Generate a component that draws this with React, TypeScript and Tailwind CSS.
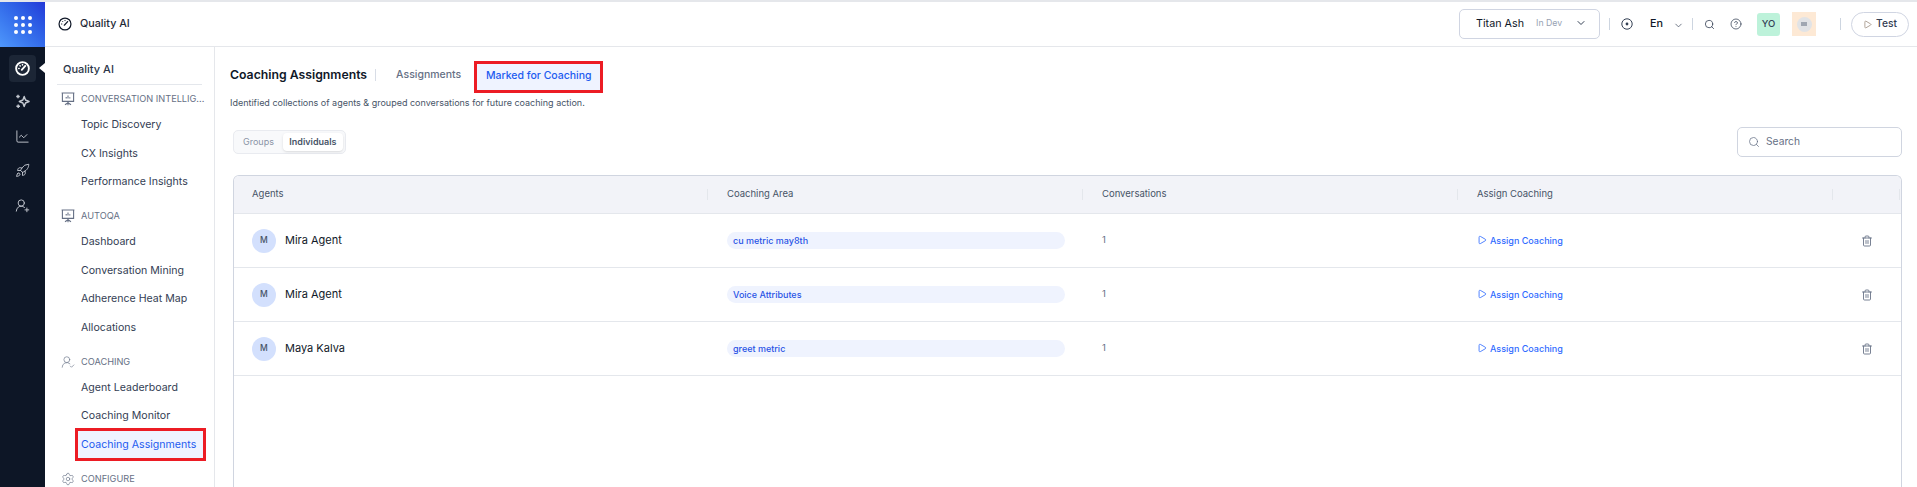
import { ChartLine, ChevronDown, CircleHelp, Play, Rocket, Search, Settings, Trash2, UserRoundCheck, UserRoundPlus } from 'lucide-react';
import type { ComponentType } from 'react';

type IconProps = { size?: number; strokeWidth?: number; className?: string };

function GaugeIcon({ size = 15, strokeWidth = 1.5, className }: IconProps) {
  return (
    <svg viewBox="0 0 16 16" width={size} height={size} fill="none" stroke="currentColor" strokeWidth={strokeWidth} strokeLinecap="round" className={className}>
      <circle cx="8" cy="8" r="6.8" />
      <path d="M7.2 9.4 11 5.2" />
      <path d="M4 8h.4M5.3 5.1l.3.3M8 3.8v.4" strokeWidth={strokeWidth * 0.8} />
    </svg>
  );
}

function BoardIcon({ size = 14, strokeWidth = 1.1, className }: IconProps) {
  return (
    <svg viewBox="0 0 14 14" width={size} height={size} fill="none" stroke="currentColor" strokeWidth={strokeWidth} className={className}>
      <path d="M.6 1h12.8M1.4 1v8.4h11.2V1" />
      <path d="M5.2 6.6V5M7 6.6V3.6M8.8 6.6V5.2" />
      <path d="M7 9.4v1.4M7 10.8l-3 2M7 10.8l3 2M7 10.8v2.4" />
    </svg>
  );
}

function StarsIcon({ size = 15, strokeWidth = 1.5, className }: IconProps) {
  return (
    <svg viewBox="0 0 16 16" width={size} height={size} fill="none" stroke="currentColor" strokeWidth={strokeWidth} strokeLinejoin="round" className={className}>
      <path d="M9.8 2.6 11.2 6.4 15 8 11.2 9.6 9.8 13.4 8.4 9.6 4.6 8 8.4 6.4Z" />
      <path d="M3.2 .8v3.8M1.3 2.7h3.8M3.4 11.2v3.8M1.5 13.1h3.8" />
    </svg>
  );
}

type NavSection = {
  title: string;
  Icon: ComponentType<IconProps>;
  items: string[];
};

const navSections: NavSection[] = [
  { title: 'CONVERSATION INTELLIG...', Icon: BoardIcon, items: ['Topic Discovery', 'CX Insights', 'Performance Insights'] },
  { title: 'AUTOQA', Icon: BoardIcon, items: ['Dashboard', 'Conversation Mining', 'Adherence Heat Map', 'Allocations'] },
  { title: 'COACHING', Icon: UserRoundCheck, items: ['Agent Leaderboard', 'Coaching Monitor', 'Coaching Assignments'] },
  { title: 'CONFIGURE', Icon: Settings, items: [] },
];

const rows = [
  { name: 'Mira Agent', area: 'cu metric may8th' },
  { name: 'Mira Agent', area: 'Voice Attributes' },
  { name: 'Maya Kalva', area: 'greet metric' },
];

const railIcons = [StarsIcon, ChartLine, Rocket, UserRoundPlus];

function DotGrid() {
  return (
    <div className="grid grid-cols-3 gap-[3px]">
      {Array.from({ length: 9 }).map((_, i) => (
        <span key={i} className="h-[4px] w-[4px] rounded-full bg-white" />
      ))}
    </div>
  );
}

function Rail() {
  return (
    <div className="flex w-[45px] shrink-0 flex-col bg-[#0d1626]">
      <div className="flex h-[45px] shrink-0 items-center justify-center bg-gradient-to-tr from-[#4f97fb] to-[#2438d8]">
        <DotGrid />
      </div>
      <div className="relative mx-[9px] mt-2 flex h-[27px] w-[27px] items-center justify-center rounded-[4px] bg-[#1c2636]">
        <GaugeIcon size={15} strokeWidth={2} className="text-white" />
        <span className="absolute left-[30px] top-[8px] h-0 w-0 border-y-[5px] border-r-[6px] border-y-transparent border-r-white" />
      </div>
      <div className="mt-[12px] flex flex-col items-center gap-[19.5px] text-[#c3c8d0]">
        {railIcons.map((Icon, i) => (
          <Icon key={i} size={15} strokeWidth={1.5} />
        ))}
      </div>
    </div>
  );
}

function SideNav() {
  return (
    <aside className="h-full w-[170px] shrink-0 overflow-hidden border-r border-[#e5e7eb] bg-white px-[12px]">
      <div className="flex h-[38px] items-center border-b border-[#e4e7ec] pl-[6px] pt-[7px] text-[11px] font-medium text-[#2b3648]">
        Quality AI
      </div>
      <div className="pt-[2px]">
        {navSections.map(({ title, Icon, items }) => (
          <div key={title} className="mb-[7.5px]">
            <div className="flex h-[24px] items-center gap-[6px] pl-[4px] text-[#667085]">
              <Icon size={14} strokeWidth={1.1} className="shrink-0" />
              <span className="whitespace-nowrap text-[9.2px]">{title}</span>
            </div>
            {items.map((item) =>
              item === 'Coaching Assignments' ? (
                <div
                  key={item}
                  className="ml-[18px] -my-[2.25px] flex h-[33px] w-[131px] items-center whitespace-nowrap border-[3px] border-[#ec1c24] bg-[#eff3ff] pl-[3px] text-[10.6px] text-[#1d5bf0]"
                >
                  {item}
                </div>
              ) : (
                <div key={item} className="ml-[24px] flex h-[28.5px] items-center whitespace-nowrap text-[10.6px] text-[#344054]">
                  {item}
                </div>
              ),
            )}
          </div>
        ))}
      </div>
    </aside>
  );
}

function CircleDotIcon() {
  return (
    <svg viewBox="0 0 12 12" className="ml-[11px] h-[12px] w-[12px] text-[#344054]" fill="none" stroke="currentColor">
      <circle cx="6" cy="6" r="5.2" strokeWidth="1" />
      <circle cx="6" cy="6" r="1.4" fill="currentColor" stroke="none" />
    </svg>
  );
}

function TopBar() {
  return (
    <header className="flex h-[45px] shrink-0 items-center justify-between border-b border-[#e5e7eb] bg-white pl-[13px] pr-[8px]">
      <div className="flex items-center gap-[8px] text-[10.75px] font-medium text-[#1f2937]">
        <GaugeIcon size={14} strokeWidth={1.4} className="text-[#101828]" />
        <span>Quality AI</span>
      </div>
      <div className="flex items-center">
        <div className="flex h-[30px] w-[141px] items-center rounded-[5px] border border-[#d0d5e2] pl-[16px] pr-[12px]">
          <span className="text-[10.75px] text-[#101828]">Titan Ash</span>
          <span className="ml-[12px] text-[8.75px] text-[#98a2b3]">In Dev</span>
          <ChevronDown size={12} strokeWidth={2} className="ml-auto -mt-[2px] text-[#344054]" />
        </div>
        <span className="ml-[9px] h-[12px] w-px bg-[#cdd5e0]" />
        <CircleDotIcon />
        <span className="ml-[17px] text-[10.75px] font-medium text-[#101828]">En</span>
        <ChevronDown size={11} strokeWidth={1.5} className="ml-[10px] mt-[2px] text-[#344054]" />
        <span className="ml-[8px] h-[12px] w-px bg-[#cdd5e0]" />
        <Search size={11} strokeWidth={1.75} className="ml-[11px] text-[#344054]" />
        <CircleHelp size={12} strokeWidth={1.5} className="ml-[15px] text-[#344054]" />
        <div className="ml-[15px] flex h-[23px] w-[23px] items-center justify-center rounded-[3px] bg-[#bdf2da] text-[9.5px] font-medium text-[#344054]">
          YO
        </div>
        <div className="ml-[12px] flex h-[24px] w-[24px] items-center justify-center bg-[#fde9d5]">
          <div className="flex h-[15px] w-[15px] items-center justify-center rounded-full bg-[#e1e3e6]">
            <div className="h-[4px] w-[6px] bg-[#a0a7b2]" />
          </div>
        </div>
        <span className="ml-[24px] h-[12px] w-px bg-[#cdd5e0]" />
        <div className="ml-[10px] flex h-[25px] w-[58px] items-center justify-center gap-[4px] rounded-full border border-[#d0d5e2] text-[10.25px] font-medium text-[#344054]">
          <Play size={9} strokeWidth={1.75} className="text-[#8a7565]" />
          Test
        </div>
      </div>
    </header>
  );
}

function HeaderCell({ label, className }: { label: string; className: string }) {
  return (
    <div className={`relative flex h-full items-center text-[9.5px] text-[#475467] ${className}`}>
      {label}
      <span className="absolute right-0 top-[13px] h-[11px] w-px bg-[#e4e7ec]" />
    </div>
  );
}

function AssignmentsTable() {
  return (
    <div className="ml-[18px] mr-[15px] mt-[18px] min-h-0 flex-1 overflow-hidden rounded-t-[6px] border border-b-0 border-[#d0d5e0]">
      <div className="flex h-[38px] border-b border-[#e4e7ec] bg-[#f2f3f8]">
        <HeaderCell label="Agents" className="w-[474px] pl-[18px]" />
        <HeaderCell label="Coaching Area" className="w-[375px] pl-[19px]" />
        <HeaderCell label="Conversations" className="w-[375px] pl-[19px]" />
        <HeaderCell label="Assign Coaching" className="w-[375px] pl-[19px]" />
        <HeaderCell label="" className="w-[67px]" />
      </div>
      {rows.map((row, i) => (
        <div key={i} className="flex h-[54px] items-center border-b border-[#e4e7ec] bg-white">
          <div className="flex w-[474px] items-center gap-[9px] pl-[18px]">
            <div className="flex h-[24px] w-[24px] items-center justify-center rounded-full bg-[#d3e0fd] text-[8.5px] font-medium text-[#475467]">
              M
            </div>
            <span className="text-[11px] text-[#101828]">{row.name}</span>
          </div>
          <div className="w-[375px] pl-[19px] pr-[18px]">
            <div className="flex h-[17px] items-center rounded-full bg-[#eff3fe] pl-[6px] text-[9px] font-medium text-[#2a54e6]">
              {row.area}
            </div>
          </div>
          <div className="w-[375px] pl-[19px] text-[9.5px] text-[#667085]">1</div>
          <div className="flex w-[375px] items-center gap-[3px] pl-[19px] text-[9px] font-medium text-[#2f6bff]">
            <Play size={10} strokeWidth={2} className="-mt-px" />
            Assign Coaching
          </div>
          <Trash2 size={12} strokeWidth={1.75} className="ml-[28px] text-[#667085]" />
        </div>
      ))}
    </div>
  );
}

export default function App() {
  return (
    <div className="flex h-[487px] w-[1917px] flex-col overflow-hidden border-t-2 border-[#e5e7eb] bg-white font-['Inter',sans-serif]">
      <div className="flex min-h-0 flex-1">
        <Rail />
        <div className="flex min-w-0 flex-1 flex-col">
          <TopBar />
          <div className="flex min-h-0 flex-1">
            <SideNav />
            <main className="flex min-w-0 flex-1 flex-col">
              <div className="mt-[14px] flex h-[32px] items-center pl-[15px]">
                <h1 className="pb-[4px] text-[12.25px] font-semibold text-[#101828]">Coaching Assignments</h1>
                <span className="mb-[4px] ml-[8px] h-[12px] w-px bg-[#d8dde6]" />
                <span className="ml-[20px] pb-[4px] text-[10.5px] font-medium text-[#667085]">Assignments</span>
                <div className="ml-[13px] flex h-[32px] w-[129px] items-center justify-center border-[3px] border-[#ec1c24] bg-[#eff3ff] pb-[2px] text-[10.5px] font-medium text-[#1d5bf0]">
                  Marked for Coaching
                </div>
              </div>
              <p className="mt-[3px] pl-[15px] text-[9px] leading-[14px] text-[#475467]">
                Identified collections of agents &amp; grouped conversations for future coaching action.
              </p>
              <div className="mt-[17px] flex h-[30px] items-center justify-between pl-[18px] pr-[15px]">
                <div className="flex h-[24px] w-[113px] items-center rounded-[5px] border border-[#e9ebf0] bg-[#f8f9fb] text-[9px]">
                  <span className="pl-[9px] text-[#8a94a6]">Groups</span>
                  <span className="ml-[9px] flex h-[18px] w-[60px] items-center justify-center rounded-[4px] bg-white font-semibold text-[#475467] shadow-sm">Individuals</span>
                </div>
                <div className="flex h-[30px] w-[165px] items-center gap-[6px] rounded-[5px] border border-[#d0d5e0] pl-[10px] text-[10.25px] text-[#667085]">
                  <Search size={12} strokeWidth={1.5} />
                  Search
                </div>
              </div>
              <AssignmentsTable />
            </main>
          </div>
        </div>
      </div>
    </div>
  );
}
